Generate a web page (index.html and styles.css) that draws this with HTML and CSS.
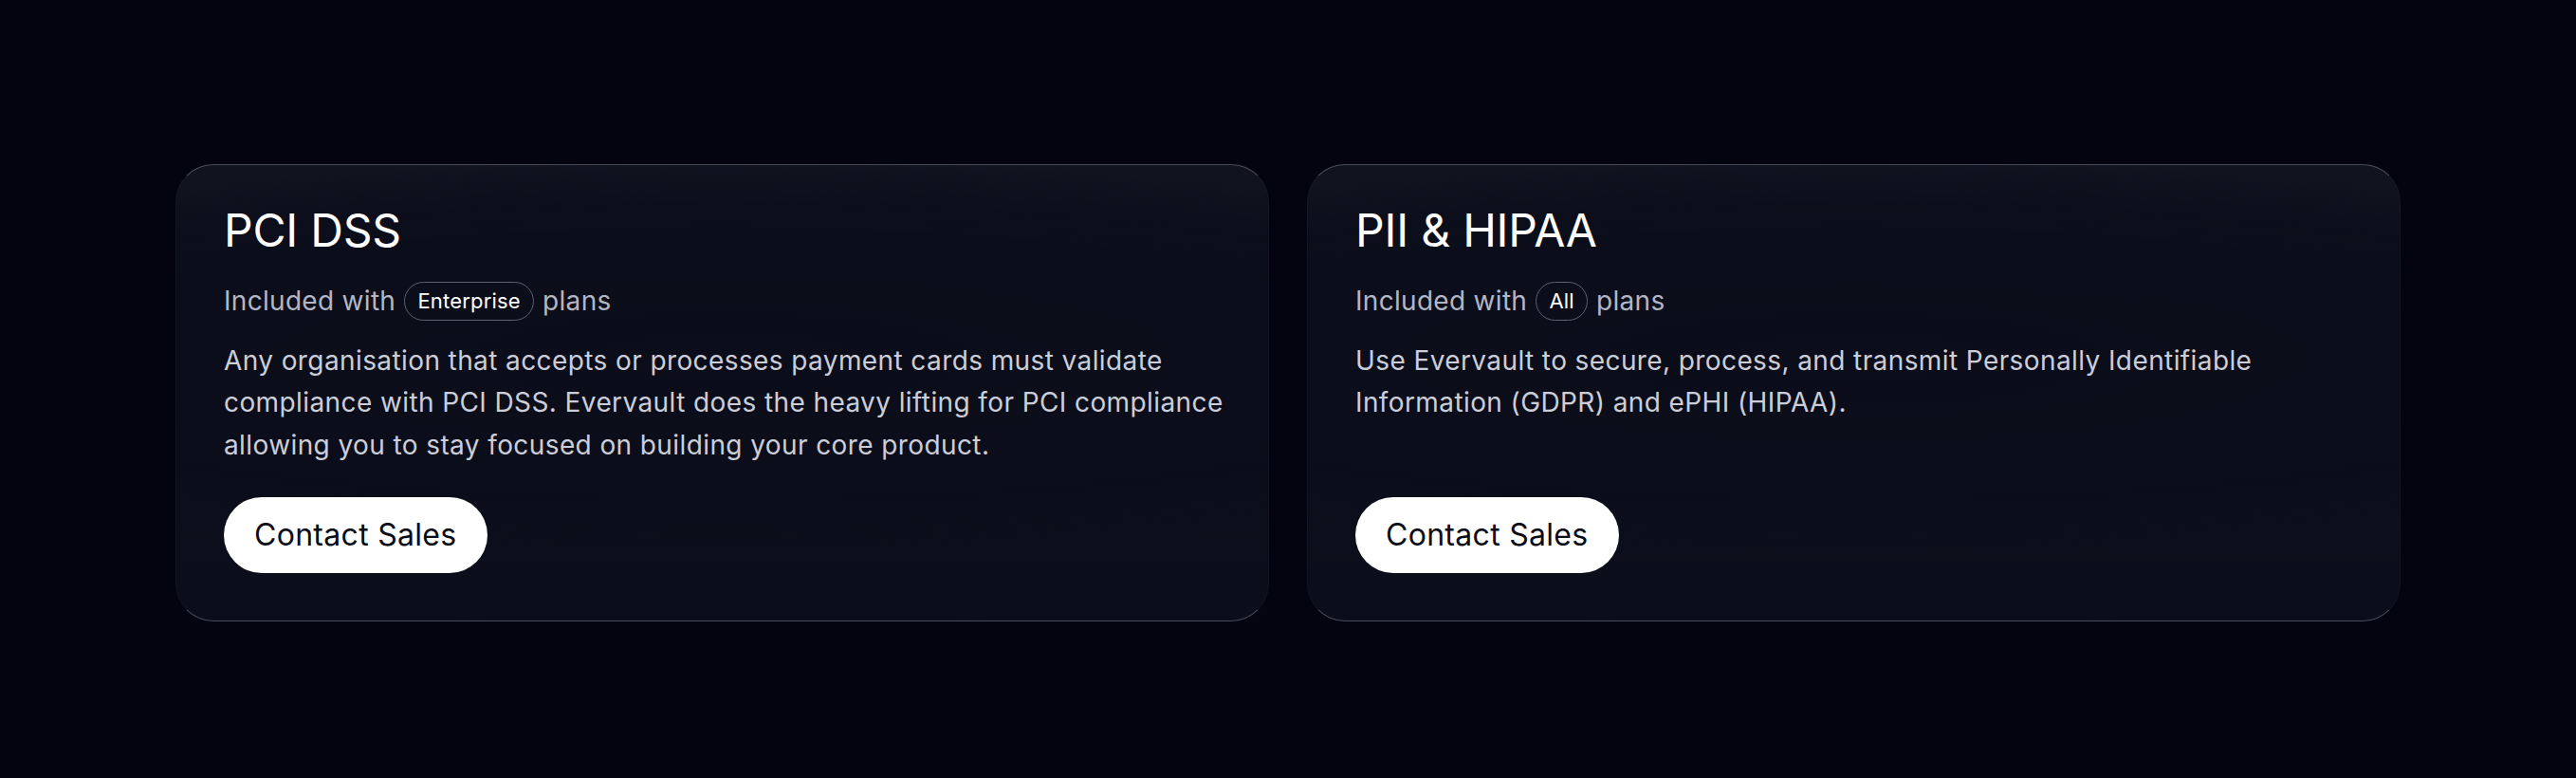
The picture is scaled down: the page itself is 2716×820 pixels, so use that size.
FILE: index.html
```html
<!DOCTYPE html>
<html lang="en">
<head>
<meta charset="utf-8">
<title>Compliance</title>
<link rel="stylesheet" href="styles.css">
</head>
<body>
<main class="page">
  <section class="grid">
    <article class="card">
      <h2 class="card-title">PCI DSS</h2>
      <p class="plans">Included with <span class="badge">Enterprise</span> plans</p>
      <p class="desc">Any organisation that accepts or processes payment cards must validate compliance with PCI DSS. Evervault does the heavy lifting for PCI compliance allowing you to stay focused on building your core product.</p>
      <a class="btn" href="#">Contact Sales</a>
    </article>
    <article class="card">
      <h2 class="card-title">PII &amp; HIPAA</h2>
      <p class="plans">Included with <span class="badge">All</span> plans</p>
      <p class="desc">Use Evervault to secure, process, and transmit Personally Identifiable Information (GDPR) and ePHI (HIPAA).</p>
      <a class="btn" href="#">Contact Sales</a>
    </article>
  </section>
</main>
</body>
</html>
```
FILE: styles.css
```css
* { box-sizing: border-box; }
html, body { margin: 0; padding: 0; }
body {
  background: #03040f;
  font-family: Inter, "Noto Sans", "Liberation Sans", sans-serif;
  color: #c9cbd7;
  min-height: 820px;
}
.page {
  padding-top: 173px;
}
.grid {
  width: 2346px;
  margin: 0 auto;
  display: grid;
  grid-template-columns: 1fr 1fr;
  gap: 40px;
}
.card {
  display: flex;
  flex-direction: column;
  align-items: flex-start;
  padding: 40px 40px 50px 50px;
  border-radius: 40px;
  border-top: 1px solid rgba(120, 124, 145, 0.55);
  border-bottom: 1px solid rgba(120, 124, 145, 0.55);
  border-left: 1px solid rgba(120, 124, 145, 0.06);
  border-right: 1px solid rgba(120, 124, 145, 0.06);
  background:
    radial-gradient(140% 60% at 50% 42%, rgba(11, 13, 26, 1) 0%, rgba(11, 13, 26, 0.9) 55%, rgba(11, 13, 26, 0) 72%),
    linear-gradient(180deg, #11131f 0%, #0e101c 45%, #0b0d1a 100%);
}
.card-title {
  margin: 0;
  font-size: 48px;
  line-height: 57.6px;
  font-weight: 400;
  color: #ffffff;
  letter-spacing: -0.2px;
}
.plans {
  margin: 25px 0 0;
  font-size: 28px;
  line-height: 41px;
  letter-spacing: 0.3px;
  color: #b3b6c4;
  display: flex;
  align-items: center;
  white-space: pre;
}
.badge {
  display: inline-flex;
  align-items: center;
  height: 41px;
  padding: 0 13px;
  margin: 0 1px;
  border: 1.5px solid #5d6170;
  border-radius: 999px;
  font-size: 22px;
  letter-spacing: 0.2px;
  color: #ffffff;
}
.desc {
  margin: 20px 0 32px;
  font-size: 28px;
  line-height: 44.8px;
  letter-spacing: 0.4px;
  color: #cbcdd9;
}
.btn {
  margin-top: auto;
  display: inline-flex;
  align-items: center;
  justify-content: center;
  height: 80px;
  padding: 0 32px;
  border-radius: 999px;
  background: #ffffff;
  color: #0a0c18;
  font-size: 32px;
  font-weight: 400;
  letter-spacing: 0.3px;
  text-decoration: none;
}
```
